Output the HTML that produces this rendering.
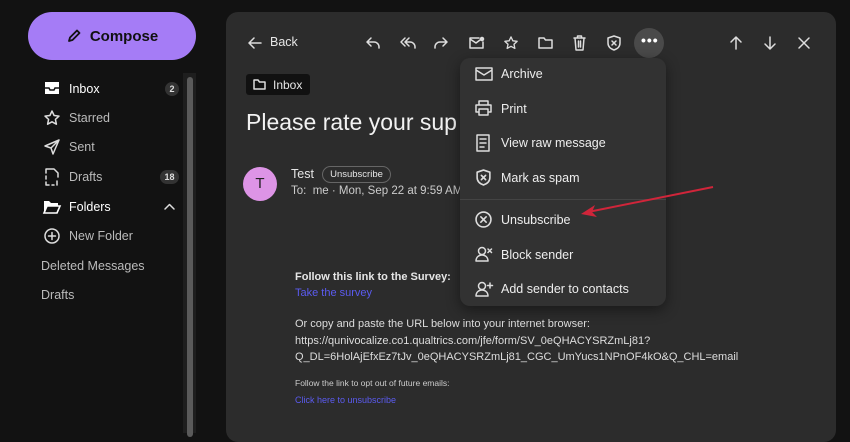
<!DOCTYPE html><html><head><style>
*{margin:0;padding:0;box-sizing:border-box}
body{width:850px;height:427px;background:#121212;font-family:"Liberation Sans",sans-serif;color:#e6e6e6;position:relative;overflow:hidden}
.a{position:absolute}
.compose{left:28px;top:12px;width:168px;height:48px;border-radius:24px;background:#a57cf6;color:#111;font-weight:bold;font-size:15px;display:flex;align-items:center;justify-content:center;gap:8px}
.nav{left:41px;font-size:12.5px;color:#bbb}
.nav.b{color:#fff}
.badge{background:#333;color:#ddd;font-size:9px;border-radius:8px;height:14px;line-height:14px;text-align:center;font-weight:bold}
.panel{left:226px;top:12px;width:610px;height:430px;background:#2c2c2c;border-radius:12px}
.menu{left:460px;top:58px;width:206px;height:248px;background:#323232;border-radius:10px;box-shadow:0 4px 14px rgba(0,0,0,.45)}
.mi{left:41px;font-size:12.5px;color:#eee}
svg{overflow:visible}
.ic{fill:none;stroke:#ddd;stroke-width:1.5;stroke-linecap:round;stroke-linejoin:round}
</style></head><body>
<div class="a compose"><svg width="16" height="16" viewBox="0 0 16 16" class="ic" style="stroke:#111;stroke-width:1.8"><path d="M3 13l1-3.5 7-7 2.5 2.5-7 7z"/></svg>Compose</div>
<div class="a" style="left:183px;top:73px;width:13px;height:360px;background:#1e1e1e"></div>
<div class="a" style="left:187px;top:77px;width:6px;height:360px;background:#5a5a5a;border-radius:3px"></div>

<svg class="a" style="left:44px;top:81px" width="16" height="14" viewBox="0 0 16 14"><path d="M1 1h14v12H1z" fill="#fff"/><path d="M1 7h4l1 2h4l1-2h4" stroke="#121212" stroke-width="1.5" fill="none"/></svg>
<div class="a nav b" style="left:69px;top:82px">Inbox</div>
<div class="a badge" style="left:165px;top:82px;width:14px">2</div>
<svg class="a ic" style="left:44px;top:110px" width="16" height="16" viewBox="0 0 16 16"><path d="M8 1l2.1 4.5 4.9.6-3.6 3.3 1 4.8L8 11.8 3.6 14.2l1-4.8L1 6.1l4.9-.6z"/></svg>
<div class="a nav" style="left:69px;top:111px">Starred</div>
<svg class="a ic" style="left:44px;top:139px" width="16" height="16" viewBox="0 0 16 16"><path d="M15 1L1 7l6 2 2 6zM7 9l8-8"/></svg>
<div class="a nav" style="left:69px;top:140px">Sent</div>
<svg class="a ic" style="left:45px;top:168px" width="14" height="18" viewBox="0 0 14 18"><path d="M1 5V1h8l4 4v4M1 8v3M1 14v3h3M7 17h2M12 13v4" /></svg>
<div class="a nav" style="left:69px;top:170px">Drafts</div>
<div class="a badge" style="left:160px;top:170px;width:19px">18</div>
<svg class="a" style="left:43px;top:200px" width="18" height="14" viewBox="0 0 18 14"><path d="M1 1h5l2 2h7v3H4L1 13z" fill="#fff"/><path d="M1 13L4 6h13l-3 7z" fill="none" stroke="#fff" stroke-width="1.6"/></svg>
<div class="a nav b" style="left:69px;top:200px">Folders</div>
<svg class="a ic" style="left:164px;top:203px" width="11" height="7" viewBox="0 0 11 7"><path d="M1 6l4.5-4.5L10 6"/></svg>
<svg class="a ic" style="left:44px;top:228px" width="16" height="16" viewBox="0 0 16 16"><circle cx="8" cy="8" r="7"/><path d="M8 4.5v7M4.5 8h7"/></svg>
<div class="a nav" style="left:69px;top:229px">New Folder</div>
<div class="a nav" style="top:259px">Deleted Messages</div>
<div class="a nav" style="top:288px">Drafts</div>

<div class="a panel"></div>
<svg class="a ic" style="left:248px;top:36px" width="14" height="14" viewBox="0 0 14 14"><path d="M13 7H1M6 2L1 7l5 5"/></svg>
<div class="a" style="left:270px;top:35px;font-size:12.5px">Back</div>
<svg class="a ic" style="left:366px;top:36px" width="14" height="14" viewBox="0 0 14 14"><path d="M5 2L1 6l4 4M1 6h7a5 5 0 0 1 5 5v1"/></svg>
<svg class="a ic" style="left:400px;top:36px" width="16" height="14" viewBox="0 0 16 14"><path d="M5 2L1 6l4 4M9 2L5 6l4 4M5 6h5a5 5 0 0 1 5 5v1"/></svg>
<svg class="a ic" style="left:434px;top:36px" width="14" height="14" viewBox="0 0 14 14"><path d="M9 2l4 4-4 4M13 6H6a5 5 0 0 0-5 5v1"/></svg>
<svg class="a ic" style="left:469px;top:37px" width="15" height="12" viewBox="0 0 15 12"><path d="M10 1H1v10h13V5M1 2l6 4 4-3"/><circle cx="13" cy="2" r="1.5" fill="#ddd"/></svg>
<svg class="a ic" style="left:504px;top:36px" width="14" height="14" viewBox="0 0 16 16"><path d="M8 1l2.1 4.5 4.9.6-3.6 3.3 1 4.8L8 11.8 3.6 14.2l1-4.8L1 6.1l4.9-.6z"/></svg>
<svg class="a ic" style="left:538px;top:37px" width="15" height="12" viewBox="0 0 15 12"><path d="M1 1h5l1.5 2H14v8H1z"/></svg>
<svg class="a ic" style="left:573px;top:35px" width="13" height="16" viewBox="0 0 13 16"><path d="M1 3h11M4.5 3V1h4v2M2 3l1 12h7l1-12M5.5 6v6M7.5 6v6"/></svg>
<svg class="a ic" style="left:607px;top:35px" width="14" height="16" viewBox="0 0 14 16"><path d="M7 1l6 2v5c0 4-3 6-6 7-3-1-6-3-6-7V3z"/><path d="M5 6l4 4M9 6l-4 4"/></svg>
<div class="a" style="left:634px;top:28px;width:30px;height:30px;border-radius:50%;background:#4a4a4a"></div>
<div class="a" style="left:641px;top:32px;font-size:14px;font-weight:bold;color:#fff;letter-spacing:1px">•••</div>
<svg class="a ic" style="left:729px;top:36px" width="14" height="14" viewBox="0 0 14 14"><path d="M7 13V1M2 6l5-5 5 5"/></svg>
<svg class="a ic" style="left:763px;top:36px" width="14" height="14" viewBox="0 0 14 14"><path d="M7 1v12M2 8l5 5 5-5"/></svg>
<svg class="a ic" style="left:798px;top:37px" width="12" height="12" viewBox="0 0 12 12"><path d="M1 1l10 10M11 1L1 11"/></svg>

<div class="a" style="left:246px;top:74px;width:64px;height:21px;background:#111;border-radius:3px"></div>
<svg class="a ic" style="left:253px;top:79px" width="13" height="11" viewBox="0 0 13 11"><path d="M1 1h4l1.5 2H12v7H1z"/></svg>
<div class="a" style="left:273px;top:78px;font-size:12px">Inbox</div>
<div class="a" style="left:246px;top:109px;font-size:23px;color:#f2f2f2">Please rate your sup</div>
<div class="a" style="left:243px;top:167px;width:34px;height:34px;border-radius:50%;background:#dd94e6;color:#222;font-size:15px;text-align:center;line-height:34px">T</div>
<div class="a" style="left:291px;top:167px;font-size:12.5px">Test</div>
<div class="a" style="left:322px;top:166px;width:69px;height:17px;border:1px solid #666;border-radius:9px;font-size:9.5px;text-align:center;line-height:15px">Unsubscribe</div>
<div class="a" style="left:291px;top:185px;font-size:11.5px;color:#ccc">To:&nbsp; me · Mon, Sep 22 at 9:59 AM</div>

<div class="a" style="left:295px;top:271px;font-size:11px;font-weight:bold">Follow this link to the Survey:</div>
<div class="a" style="left:295px;top:287px;font-size:11px;color:#5b5bf0">Take the survey</div>
<div class="a" style="left:295px;top:316px;font-size:11px;line-height:16.5px;color:#ddd">Or copy and paste the URL below into your internet browser:<br>https://qunivocalize.co1.qualtrics.com/jfe/form/SV_0eQHACYSRZmLj81?<br>Q_DL=6HolAjEfxEz7tJv_0eQHACYSRZmLj81_CGC_UmYucs1NPnOF4kO&amp;Q_CHL=email</div>
<div class="a" style="left:295px;top:378px;font-size:8.5px;color:#ccc">Follow the link to opt out of future emails:</div>
<div class="a" style="left:295px;top:395px;font-size:9px;color:#5b5bf0">Click here to unsubscribe</div>

<div class="a menu">
<svg class="a ic" style="left:15px;top:9px" width="18" height="14" viewBox="0 0 18 14"><path d="M1 1h16v12H1zM1 3l8 5 8-5"/></svg>
<div class="a mi" style="top:9px">Archive</div>
<svg class="a ic" style="left:15px;top:42px" width="17" height="16" viewBox="0 0 17 16"><path d="M4 5V1h9v4M1 5h15v7h-3M4 12H1V5M4 9h9v6H4z"/></svg>
<div class="a mi" style="top:44px">Print</div>
<svg class="a ic" style="left:16px;top:76px" width="14" height="18" viewBox="0 0 14 18"><path d="M1 1h12v16H1zM4 5h6M4 9h6M4 13h4"/></svg>
<div class="a mi" style="top:78px">View raw message</div>
<svg class="a ic" style="left:16px;top:111px" width="15" height="17" viewBox="0 0 14 16"><path d="M7 1l6 2v5c0 4-3 6-6 7-3-1-6-3-6-7V3z"/><path d="M5 6l4 4M9 6l-4 4"/></svg>
<div class="a mi" style="top:113px">Mark as spam</div>
<div class="a" style="left:0;top:141px;width:206px;height:1px;background:#444"></div>
<svg class="a ic" style="left:15px;top:153px" width="17" height="17" viewBox="0 0 16 16"><circle cx="8" cy="8" r="7"/><path d="M5.5 5.5l5 5M10.5 5.5l-5 5"/></svg>
<div class="a mi" style="top:155px">Unsubscribe</div>
<svg class="a ic" style="left:15px;top:188px" width="18" height="16" viewBox="0 0 18 16"><circle cx="7" cy="5" r="3.5"/><path d="M1 15c0-4 3-6 6-6s6 2 6 6zM13 3l3.5 3.5M16.5 3L13 6.5"/></svg>
<div class="a mi" style="top:190px">Block sender</div>
<svg class="a ic" style="left:15px;top:223px" width="18" height="16" viewBox="0 0 18 16"><circle cx="7" cy="5" r="3.5"/><path d="M1 15c0-4 3-6 6-6s6 2 6 6zM15 2v5M12.5 4.5h5"/></svg>
<div class="a mi" style="top:224px">Add sender to contacts</div>
</div>
<svg class="a" style="left:0;top:0" width="850" height="427"><path d="M713 187L588 212" stroke="#d0253a" stroke-width="2"/><path d="M581 214l14-9-3 7 5 5z" fill="#d0253a"/></svg>
</body></html>
